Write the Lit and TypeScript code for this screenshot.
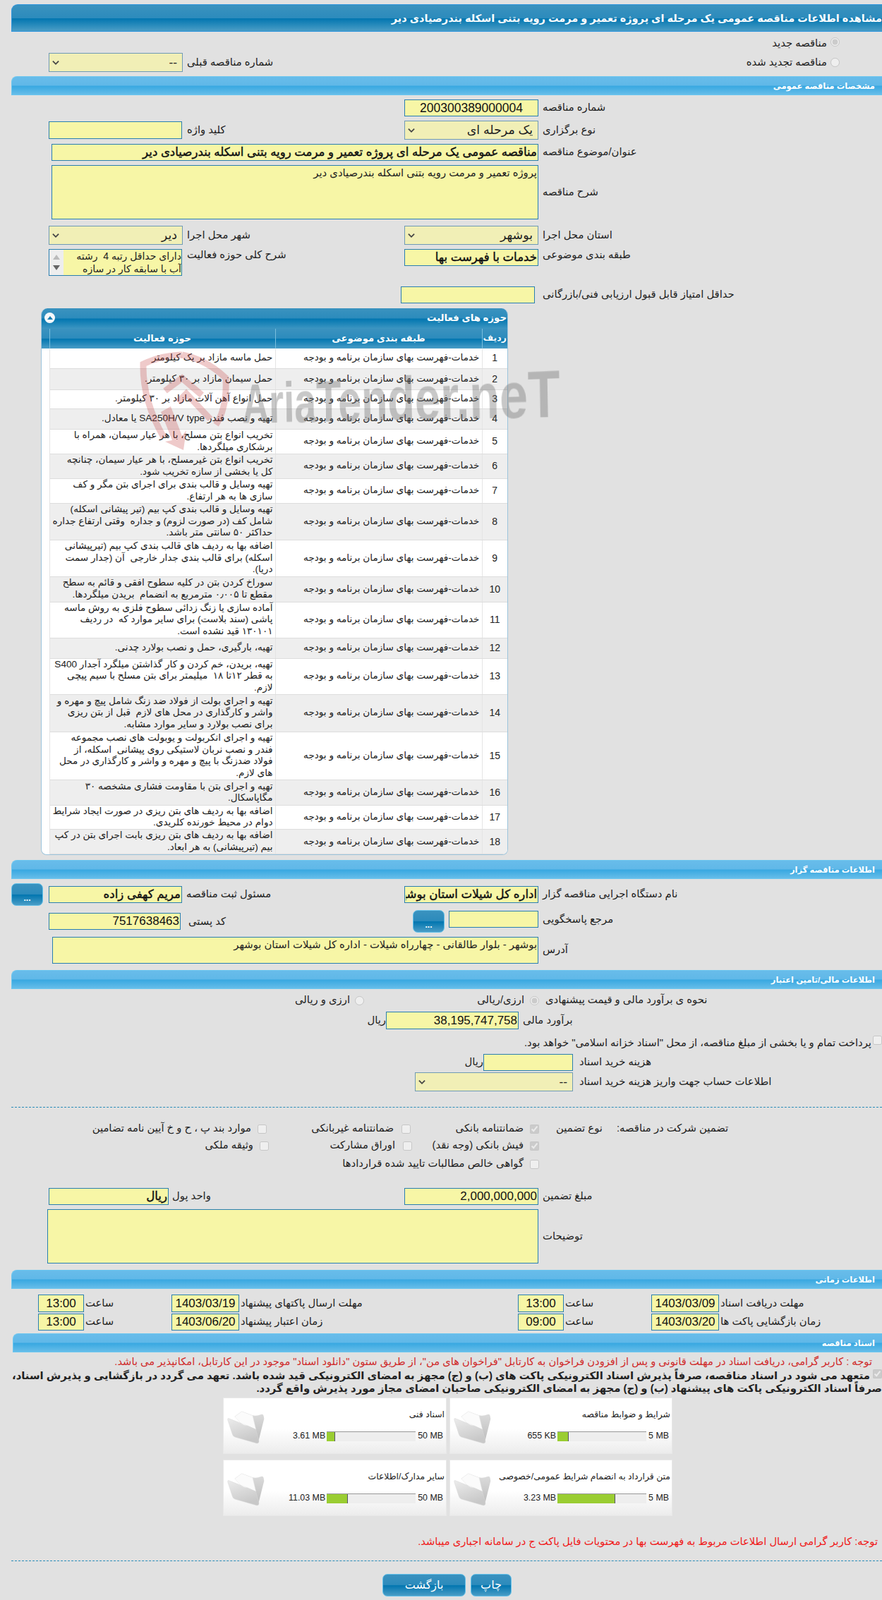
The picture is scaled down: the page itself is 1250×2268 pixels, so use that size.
import { LitElement, html, css, svg } from "lit";
import { customElement } from "lit/decorators.js";

const SVC = "خدمات-فهرست بهای سازمان برنامه و بودجه";
const ROWS: [number, string[]][] = [
  [28, ["حمل ماسه مازاد بر یک کیلومتر"]],
  [30, ["حمل سیمان مازاد بر ۳۰ کیلومتر."]],
  [27, ["حمل انواع آهن آلات مازاد بر ۳۰ کیلومتر."]],
  [29, ["تهیه و نصب فندر SA250H/V type یا معادل."]],
  [35, ["تخریب انواع بتن مسلح، با هر عیار سیمان، همراه با", "برشکاری میلگردها."]],
  [35, ["تخریب انواع بتن غیرمسلح، با هر عیار سیمان، چنانچه", "کل یا بخشی از سازه تخریب شود."]],
  [35, ["تهیه وسایل و قالب بندی برای اجرای بتن مگر و کف", "سازی ها به هر ارتفاع."]],
  [52, ["تهیه وسایل و قالب بندی کپ بیم (تیر پیشانی اسکله)", "شامل کف (در صورت لزوم) و جداره  وقتی ارتفاع جداره", "حداکثر ۵۰ سانتی متر باشد."]],
  [52, ["اضافه بها به ردیف های قالب بندی کپ بیم (تیرپیشانی", "اسکله) برای قالب بندی جدار خارجی  آن (جدار سمت", "دریا)."]],
  [36, ["سوراخ کردن بتن در کلیه سطوح افقی و قائم به سطح", "مقطع تا ۰٫۰۰۵ مترمربع به انضمام  بریدن میلگردها."]],
  [51, ["آماده سازی یا زنگ زدائی سطوح فلزی به روش ماسه", "پاشی (سند بلاست) برای سایر موارد که  در ردیف", "۱۳۰۱۰۱ قید نشده است."]],
  [29, ["تهیه، بارگیری، حمل و نصب بولارد چدنی."]],
  [51, ["تهیه، بریدن، خم کردن و کار گذاشتن میلگرد آجدار S400", "به قطر ۱۲تا ۱۸  میلیمتر برای بتن مسلح با سیم پیچی", "لازم."]],
  [53, ["تهیه و اجرای بولت از فولاد ضد زنگ شامل پیچ و مهره و", "واشر و کارگذاری در محل های لازم  قبل از بتن ریزی", "برای نصب بولارد و سایر موارد مشابه."]],
  [68, ["تهیه و اجرای انکربولت و یوبولت های نصب مجموعه", "فندر و نصب نربان لاستیکی روی پیشانی  اسکله، از", "فولاد ضدزنگ با پیچ و مهره و واشر و کارگذاری در محل", "های لازم."]],
  [36, ["تهیه و اجرای بتن با مقاومت فشاری مشخصه ۳۰", "مگاپاسکال."]],
  [34, ["اضافه بها به ردیف های بتن ریزی در صورت ایجاد شرایط", "دوام در محیط خورنده کلریدی."]],
  [35, ["اضافه بها به ردیف های بتن ریزی بابت اجرای بتن در کپ", "بیم (تیرپیشانی) به هر ابعاد."]],
];

const DOCS: [string, string, number, string][] = [
  ["اسناد فنی", "3.61 MB", 9, "50 MB"],
  ["شرایط و ضوابط مناقصه", "655 KB", 13, "5 MB"],
  ["سایر مدارک/اطلاعات", "11.03 MB", 24, "50 MB"],
  ["متن قرارداد به انضمام شرایط عمومی/خصوصی", "3.23 MB", 65, "5 MB"],
];

const chevron = html`<svg class="chev" viewBox="0 0 11 8"><path d="M1 1.5 L5.5 6 L10 1.5" fill="none" stroke="#444" stroke-width="2"/></svg>`;
const folder = svg`<svg class="folder" viewBox="0 0 56 50">
  <defs>
    <linearGradient id="fg" x1="0" y1="0" x2="0.4" y2="1"><stop offset="0" stop-color="#ececec"/><stop offset="1" stop-color="#c8c8c8"/></linearGradient>
    <linearGradient id="fb" x1="0" y1="0" x2="0" y2="1"><stop offset="0" stop-color="#dedede"/><stop offset="1" stop-color="#bcbcbc"/></linearGradient>
  </defs>
  <path d="M11.7 10 L21.7 2.7 L36.7 8.3 Q43 9.5 49 7 Q52 6 52.6 9 L53.3 13.3 L45 46 L30 20 Z" fill="url(#fb)"/>
  <path d="M11.7 10 L21.7 2.7 L37 8.6 L41.7 28.3 L26.7 21.7 L20 19.3 Z" fill="#fbfbfb" stroke="#e6e6e6" stroke-width=".5"/>
  <path d="M3 12.6 L20 19.3 Q24 23 30 23 L41.7 28.3 L46 45 Q46 48 43 48 L12 39 Q9 38 8 34 L1.7 14.5 Q1.5 12.2 3 12.6 Z" fill="url(#fg)" stroke="#d8d8d8" stroke-width=".5"/>
</svg>`;

@customElement("app-root")
export class AppRoot extends LitElement {
  static styles = css`
    :host { display: block; position: relative; width: 1250px; height: 2268px; overflow: hidden; background: #e1e1e1;
      font-family: "Liberation Sans", "DejaVu Sans", sans-serif; font-size: 14.8px; line-height: 17.3px; color: #222; }
    * { box-sizing: border-box; }
    input[type="checkbox"], input[type="radio"] { margin: 0; width: 13px; height: 13px; }
    .title { margin: 6px 0 0 16px; height: 39px; border: 1px solid #2f95dd; border-right: 0; border-radius: 9px 0 0 0;
      background: linear-gradient(#3a92bf 0, #2c8bbc 50%, #0276b0 52%, #4a9dc6 100%);
      color: #fff; font-weight: bold; font-size: 14.5px; line-height: 38px; direction: rtl; white-space: nowrap; overflow: hidden; }
    .sec { margin-left: 16px; height: 27px; border: 1px solid #6cc6ef; border-right: 0; border-radius: 8px 0 0 0;
      background: linear-gradient(#68bcea 0, #60b8e8 48%, #38a8e1 52%, #66bde9 100%);
      color: #fff; font-weight: bold; font-size: 11.5px; line-height: 27px; direction: rtl; padding-right: 10px; white-space: nowrap; }
    .sec.s5 { margin-left: 18px; }
    .g { display: grid; grid-template-columns: 190px 314px 190px 1fr; padding-left: 69px; align-items: center; }
    .wide { display: grid; grid-template-columns: 690px 1fr; padding-left: 73px; align-items: center; }
    .lb { direction: rtl; text-align: left; padding-left: 6px; white-space: nowrap; }
    .inp { display: block; width: 100%; height: 24px; background: #f7f6a6; border: 1px solid #2a7fb0; direction: rtl; padding: 0 1px;
      font: 17px/22px "Liberation Sans", "DejaVu Sans", sans-serif; color: #111; white-space: nowrap; overflow: hidden; outline: none; }
    .inp.c { text-align: center; font-size: 17.5px; }
    .inp.b { font-size: 16.6px; -webkit-text-stroke: .45px #111; }
    .ta { display: block; width: 100%; background: #f7f6a6; border: 1px solid #2a7fb0; direction: rtl; padding: 2px 1px; font: 14.8px/17px "Liberation Sans", "DejaVu Sans", sans-serif; color: #222; resize: none; outline: none; }
    .sel { display: flex; justify-content: space-between; align-items: center; width: 100%; height: 27px; background: #f1efb6; border: 1px solid #6f9ab5; direction: rtl; padding: 0 7px 0 4px; font-size: 17.4px; color: #222; }
    .chev { width: 10px; height: 8px; flex: none; }
    .h25 { height: 25px; }
    .w189 { width: 189px; }
    .mt2 { margin-top: 2px; } .mt4 { margin-top: 4px; } .mt6 { margin-top: 6px; } .mt7 { margin-top: 7px; } .mt8 { margin-top: 8px; }
    .mt9 { margin-top: 9px; } .mt18 { margin-top: 18px; } .mt21 { margin-top: 21px; } .mt22 { margin-top: 22px; } .mt25 { margin-top: 25px; } .mt27 { margin-top: 27px; }
    .rad-row { direction: rtl; display: flex; align-items: flex-start; gap: 5px; padding-right: 60px; justify-content: flex-start; white-space: nowrap; }
    .top-a { height: 30px; padding-top: 8px; }
    .top-b { display: grid; grid-template-columns: 190px 1fr 300px; padding-left: 69px; height: 27px; align-items: center; }
    .top-b .rad-row { align-items: center; }
    .start { align-items: start; }
    .multi { display: flex; width: 189px; height: 38px; border: 1px solid #2a7fb0; background: #f7f6a6; }
    .sb { width: 20px; flex: none; background: #eee; display: flex; flex-direction: column; align-items: center; justify-content: space-around; padding: 3px 0; }
    .tri-u { width: 0; height: 0; border: 5px solid transparent; border-top: 0; border-bottom: 7px solid #bbb; }
    .tri-d { width: 0; height: 0; border: 5px solid transparent; border-bottom: 0; border-top: 7px solid #666; }
    .mtx { flex: 1; direction: rtl; font-size: 14px; line-height: 18px; white-space: pre; overflow: hidden; }
    .g7 { display: grid; grid-template-columns: 190px 1fr; padding-left: 568px; margin-top: 15px; align-items: center; }
    .lb11 { padding-left: 11px; }

    .panel { margin: 7px 0 0 58px; width: 662px; background: #fff; border: 1px solid #9cc4dc; border-top: 0; border-radius: 9px 9px 8px 8px; overflow: hidden; }
    .p-h { height: 29px; background: linear-gradient(#3a92bf 0, #2c8bbc 48%, #0276b0 52%, #3d96c2 100%); color: #fff; font-weight: bold; font-size: 13.3px; line-height: 28px; direction: rtl; display: flex; justify-content: space-between; padding: 0 1px 0 4px; }
    .toggle { width: 15px; height: 15px; border-radius: 50%; background: #f4f8fb; margin-top: 6px; display: flex; align-items: center; justify-content: center; }
    .toggle i { display: block; width: 0; height: 0; border: 4px solid transparent; border-top: 0; border-bottom: 5px solid #1a7fb2; }
    table { border-collapse: collapse; table-layout: fixed; width: 660px; }
    col.c0 { width: 11px; } col.c1 { width: 320px; } col.c2 { width: 293px; } col.c3 { width: 36px; }
    th { height: 28px; padding: 0; border-right: 1px solid #79bedd; color: #fff; font-size: 13.2px; font-weight: bold; text-align: center; direction: rtl; white-space: nowrap;
      background: linear-gradient(#3a92bf 0, #2c8bbc 48%, #0276b0 52%, #4a9dc6 100%); }
    th:last-child { border-right: 0; font-size: 12.6px; }
    td { padding: 0 3px; border-right: 1px solid #e4e4e4; border-bottom: 1px solid #ddd; direction: rtl; text-align: right; vertical-align: middle; color: #222; white-space: pre; font-size: 13.6px; line-height: 16.7px; }
    td:last-child { border-right: 0; text-align: center; font-size: 14px; }
    td:first-child { border-bottom: 0; padding: 0; }
    tr.alt td:not(:first-child) { background: #eee; }

    .btn { display: flex; align-items: center; justify-content: center; border: 1px solid #63c1ea; border-radius: 7px; color: #fff; font-size: 16px;
      background: linear-gradient(#3a92bf 0, #2c8bbc 48%, #0276b0 52%, #4a9dc6 100%); direction: rtl; }
    .dots { width: 45px; height: 32px; font-weight: bold; font-size: 12px; padding-top: 11px; }
    .ga { display: grid; grid-template-columns: 45px 8px 189px 315px 190px 1fr; padding-left: 16px; align-items: center; }
    .gb { display: grid; grid-template-columns: 187px 329px 44px 7px 127px 1fr; padding-left: 69px; align-items: start; }
    .p1 { margin-top: 1px; } .p4 { margin-top: 4px; }
    .lbm { line-height: 24px; }
    .gaddr { display: grid; grid-template-columns: 689px 1fr; padding-left: 74px; align-items: center; }
    .grad { display: grid; grid-template-columns: 503px 16px 232px 16px 1fr; height: 18px; align-items: center; }
    .t { direction: rtl; white-space: nowrap; text-align: right; }
    .grad .t { padding-right: 7px; }
    .grad .t2 { padding-right: 8px; }
    .gest { display: grid; grid-template-columns: 518px 29px 188px 1fr; align-items: center; }
    .pay { direction: rtl; display: flex; gap: 2px; height: 20px; white-space: nowrap; }
    .pay span { padding-top: 2px; }
    .gbuy { display: grid; grid-template-columns: 662px 23px 127px 1fr; align-items: center; }
    .gacc { display: grid; grid-template-columns: 224px 1fr; padding-left: 588px; align-items: center; }
    .lb9 { padding-left: 9px; }
    .dash { margin-left: 16px; border-top: 1px dashed #2a8cb8; height: 0; }
    .gcb { display: grid; grid-template-columns: 365px 16px 188px 16px 166px 16px 1fr; height: 18px; align-items: center; }
    .gcb.r2 { grid-template-columns: 368px 16px 187px 16px 164px 16px 1fr; }
    .gcb .a { padding-right: 9px; }
    .gcb .b { padding-right: 11px; }
    .gcb input { justify-self: start; }
    .gcb-h { display: flex; direction: ltr; gap: 20px; padding-left: 21px; }
    .gcb-h span { direction: rtl; white-space: nowrap; }
    .third { grid-column: 5; justify-self: end; }
    .gm { display: grid; grid-template-columns: 170px 334px 190px 1fr; padding-left: 69px; align-items: center; }
    .lb5 { padding-left: 5px; }
    .gt { display: grid; grid-template-columns: 65px 124px 96px 395px 65px 124px 96px 1fr; padding-left: 54px; align-items: center; }
    .gt .lb { padding-left: 2px; }
    .gt .inp { padding: 0; text-align: center; }
    .gd { display: grid; grid-template-columns: 696px 1fr; padding-left: 67px; align-items: center; }
    .note { direction: rtl; white-space: nowrap; height: 18px; line-height: 18px; font-size: 14.7px; }
    .red1 { color: #d02a2a; padding-right: 14px; }
    .blk { font-weight: bold; font-size: 14.9px; line-height: 18px; direction: rtl; white-space: nowrap; height: 36px; }
    .blk input { vertical-align: top; margin: 0 0 0 4px; }
    .docs { display: grid; grid-template-columns: 317px 316px; column-gap: 4px; row-gap: 8px; margin: 4px 0 0 316px; font-size: 12.4px; }
    .card { display: grid; grid-template-columns: 66px minmax(0, 1fr); height: 80px; min-width: 0; background: linear-gradient(#fff 0, #fff 55%, #ececec 100%); border: 1px solid #e8e8e8; }
    .folder { width: 56px; height: 50px; margin: 16px 0 0 4px; display: block; }
    .c-t { direction: rtl; white-space: nowrap; padding: 15px 2px 0 0; height: 32px; }
    .prog { display: flex; align-items: center; margin-top: 15px; height: 14px; }
    .val { flex: 1; text-align: right; padding-right: 2px; white-space: nowrap; }
    .max { padding: 0 4px 0 3px; white-space: nowrap; }
    .bar { width: 126px; height: 14px; background: #eee; border-top: 1px solid #999; display: flex; }
    .bar i { display: block; height: 100%; background: #9acd32; border-right: 1px solid #556; }
    .red2 { color: #f01818; padding-right: 6px; }
    .btns { display: flex; justify-content: flex-start; gap: 7px; padding-left: 542px; margin-top: 18px; direction: ltr; }
    .b1 { width: 118px; height: 32px; }
    .b2 { width: 58px; height: 32px; }
    .wm { position: absolute; left: 344px; top: 540px; font: bold 78px/66px "Liberation Sans", sans-serif; color: rgba(110,110,110,.38); white-space: nowrap; transform-origin: 0 100%; transform: rotate(-1deg) perspective(1196px) rotateY(-30deg) scaleX(.76); pointer-events: none; }
    .logo { position: absolute; left: 198px; top: 498px; width: 128px; height: 142px; pointer-events: none; }
  `;

  private sel(v: string) { return html`<div class="sel"><span>${v}</span>${chevron}</div>`; }

  render() {
    return html`
      <div class="title">مشاهده اطلاعات مناقصه عمومی یک مرحله ای پروژه تعمیر و مرمت رویه بتنی اسکله بندرصیادی دیر</div>
      <div class="rad-row top-a"><input type="radio" disabled checked /><span>مناقصه جدید</span></div>
      <div class="top-b">
        ${this.sel("--")}
        <div class="lb">شماره مناقصه قبلی</div>
        <div class="rad-row"><input type="radio" disabled /><span>مناقصه تجدید شده</span></div>
      </div>
      <div class="sec mt6">مشخصات مناقصه عمومی</div>

      <div class="g mt6"><div></div><div></div><input class="inp c" readonly value="200300389000004" /><div class="lb">شماره مناقصه</div></div>
      <div class="g mt6">
        <input class="inp h25 w189" readonly />
        <div class="lb">کلید واژه</div>
        ${this.sel("یک مرحله ای")}
        <div class="lb">نوع برگزاری</div>
      </div>
      <div class="wide mt6"><input class="inp b" readonly value="مناقصه عمومی یک مرحله ای پروژه تعمیر و مرمت رویه بتنی اسکله بندرصیادی دیر" /><div class="lb">عنوان/موضوع مناقصه</div></div>
      <div class="wide mt6"><textarea class="ta" style="height:77px" readonly>پروژه تعمیر و مرمت رویه بتنی اسکله بندرصیادی دیر</textarea><div class="lb">شرح مناقصه</div></div>
      <div class="g mt9">
        ${this.sel("دیر")}<div class="lb">شهر محل اجرا</div>
        ${this.sel("بوشهر")}<div class="lb">استان محل اجرا</div>
      </div>
      <div class="g mt6 start">
        <div class="multi"><div class="sb"><div class="tri-u"></div><div class="tri-d"></div></div><div class="mtx">دارای حداقل رتبه 4  رشته<br />آب با سابقه کار در سازه</div></div>
        <div class="lb">شرح کلی حوزه فعالیت</div>
        <input class="inp b" readonly value="خدمات با فهرست بها" />
        <div class="lb">طبقه بندی موضوعی</div>
      </div>
      <div class="g7"><input class="inp" readonly /><div class="lb lb11">حداقل امتیاز قابل قبول ارزیابی فنی/بازرگانی</div></div>

      <div class="panel">
        <div class="p-h"><span>حوزه های فعالیت</span><div class="toggle"><i></i></div></div>
        <table>
          <colgroup><col class="c0" /><col class="c1" /><col class="c2" /><col class="c3" /></colgroup>
          <thead><tr><th></th><th>حوزه فعالیت</th><th>طبقه بندی موضوعی</th><th>ردیف</th></tr></thead>
          <tbody>
            ${ROWS.map(([h, lines], i) => html`<tr class=${i % 2 ? "alt" : ""} style="height:${h}px">
              <td></td>
              <td>${lines.map((l, j) => html`${j ? html`<br />` : ""}${l}`)}</td>
              <td>${SVC}</td>
              <td>${i + 1}</td>
            </tr>`)}
          </tbody>
        </table>
      </div>

      <div class="sec mt7">اطلاعات مناقصه گزار</div>
      <div class="ga mt6">
        <div class="btn dots">...</div><div></div>
        <input class="inp b" readonly value="مریم کهفی زاده" />
        <div class="lb">مسئول ثبت مناقصه</div>
        <input class="inp b" readonly value="اداره کل شیلات استان بوشهر" />
        <div class="lb">نام دستگاه اجرایی مناقصه گزار</div>
      </div>
      <div class="gb mt6">
        <input class="inp p4" readonly value="7517638463" />
        <div class="lb lbm p4 lb11">کد پستی</div>
        <div class="btn dots">...</div><div></div>
        <input class="inp p1" readonly />
        <div class="lb lbm p1">مرجع پاسخگویی</div>
      </div>
      <div class="gaddr mt6"><textarea class="ta" style="height:38px" readonly>بوشهر - بلوار طالقانی - چهارراه شیلات - اداره کل شیلات استان بوشهر</textarea><div class="lb">آدرس</div></div>

      <div class="sec mt9">اطلاعات مالی/تامین اعتبار</div>
      <div class="grad mt7">
        <div class="t">ارزی و ریالی</div><input type="radio" disabled />
        <div class="t t2">ارزی/ریالی</div><input type="radio" disabled checked />
        <div class="lb">نحوه ی برآورد مالی و قیمت پیشنهادی</div>
      </div>
      <div class="gest mt7">
        <div></div><div class="t">ریال</div>
        <input class="inp h25" readonly value="38,195,747,758" />
        <div class="lb">برآورد مالی</div>
      </div>
      <div class="pay mt9"><input type="checkbox" disabled /><span>پرداخت تمام و یا بخشی از مبلغ مناقصه، از محل "اسناد خزانه اسلامی" خواهد بود.</span></div>
      <div class="gbuy mt6"><div></div><div class="t">ریال</div><input class="inp" readonly /><div class="lb lb9">هزینه خرید اسناد</div></div>
      <div class="gacc mt2">${this.sel("--")}<div class="lb lb9">اطلاعات حساب جهت واریز هزینه خرید اسناد</div></div>
      <div class="dash mt22"></div>
      <div class="gcb mt21">
        <div class="t a">موارد بند پ ، ح و خ آیین نامه تضامین</div><input type="checkbox" disabled />
        <div class="t b">ضمانتنامه غیربانکی</div><input type="checkbox" disabled />
        <div class="t a">ضمانتنامه بانکی</div><input type="checkbox" disabled checked />
        <div class="gcb-h"><span>نوع تضمین</span><span>تضمین شرکت در مناقصه:</span></div>
      </div>
      <div class="gcb r2 mt6">
        <div class="t a">وثیقه ملکی</div><input type="checkbox" disabled />
        <div class="t b">اوراق مشارکت</div><input type="checkbox" disabled />
        <div class="t a">فیش بانکی (وجه نقد)</div><input type="checkbox" disabled checked />
        <div></div>
      </div>
      <div class="gcb mt8">
        <div class="t a third">گواهی خالص مطالبات تایید شده قراردادها</div><input type="checkbox" disabled />
      </div>
      <div class="gm mt25">
        <input class="inp b" readonly value="ریال" />
        <div class="lb lb5">واحد پول</div>
        <input class="inp" readonly value="2,000,000,000" />
        <div class="lb">مبلغ تضمین</div>
      </div>
      <div class="gd mt6"><textarea class="ta" style="height:77px" readonly></textarea><div class="lb">توضیحات</div></div>

      <div class="sec mt9">اطلاعات زمانی</div>
      <div class="gt mt8">
        <input class="inp h25" readonly value="13:00" /><div class="lb">ساعت</div>
        <input class="inp h25" readonly value="1403/03/19" /><div class="lb">مهلت ارسال پاکتهای پیشنهاد</div>
        <input class="inp h25" readonly value="13:00" /><div class="lb">ساعت</div>
        <input class="inp h25" readonly value="1403/03/09" /><div class="lb">مهلت دریافت اسناد</div>
      </div>
      <div class="gt mt2">
        <input class="inp" readonly value="13:00" /><div class="lb">ساعت</div>
        <input class="inp" readonly value="1403/06/20" /><div class="lb">زمان اعتبار پیشنهاد</div>
        <input class="inp" readonly value="09:00" /><div class="lb">ساعت</div>
        <input class="inp" readonly value="1403/03/20" /><div class="lb">زمان بازگشایی پاکت ها</div>
      </div>

      <div class="sec s5 mt4">اسناد مناقصه</div>
      <div class="note red1 mt4">توجه : کاربر گرامی، دریافت اسناد در مهلت قانونی و پس از افزودن فراخوان به کارتابل "فراخوان های من"، از طریق ستون "دانلود اسناد" موجود در این کارتابل، امکانپذیر می باشد.</div>
      <div class="blk mt2"><input type="checkbox" disabled checked />متعهد می شود در اسناد مناقصه، صرفاً پذیرش اسناد الکترونیکی پاکت های (ب) و (ج) مجهز به امضای الکترونیکی قید شده باشد. تعهد می گردد در بازگشایی و پذیرش اسناد،<br />صرفاً اسناد الکترونیکی پاکت های پیشنهاد (ب) و (ج) مجهز به امضای الکترونیکی صاحبان امضای مجاز مورد پذیرش واقع گردد.</div>
      <div class="docs">
        ${DOCS.map((d) => html`<div class="card">
          ${folder}
          <div>
            <div class="c-t">${d[0]}</div>
            <div class="prog"><span class="val">${d[1]}</span><div class="bar"><i style="width:${d[2]}%"></i></div><span class="max">${d[3]}</span></div>
          </div>
        </div>`)}
      </div>
      <div class="note red2 mt27">توجه: کاربر گرامی ارسال اطلاعات مربوط به فهرست بها در محتویات فایل پاکت ج در سامانه اجباری میباشد.</div>
      <div class="dash mt18"></div>
      <div class="btns"><div class="btn b1">بازگشت</div><div class="btn b2">چاپ</div></div>

      <svg class="logo" viewBox="0 0 128 142">
        <g fill="none" stroke="#c43a3a" stroke-opacity=".27" stroke-width="9">
          <path d="M60 5 Q30 6 5 18 Q4 70 34 122"/>
          <path d="M60 5 Q95 12 122 38 Q124 80 108 104"/>
          <path d="M36 56 L60 38 L88 62"/>
          <path d="M54 72 L66 60 L100 96"/>
        </g>
        <path d="M30 86 L44 78 L60 120 L66 112 L62 140 L36 128 L46 126 Z" fill="#c43a3a" fill-opacity=".27"/>
      </svg>
      <div class="wm">AriaTender.neT</div>
    `;
  }
}
